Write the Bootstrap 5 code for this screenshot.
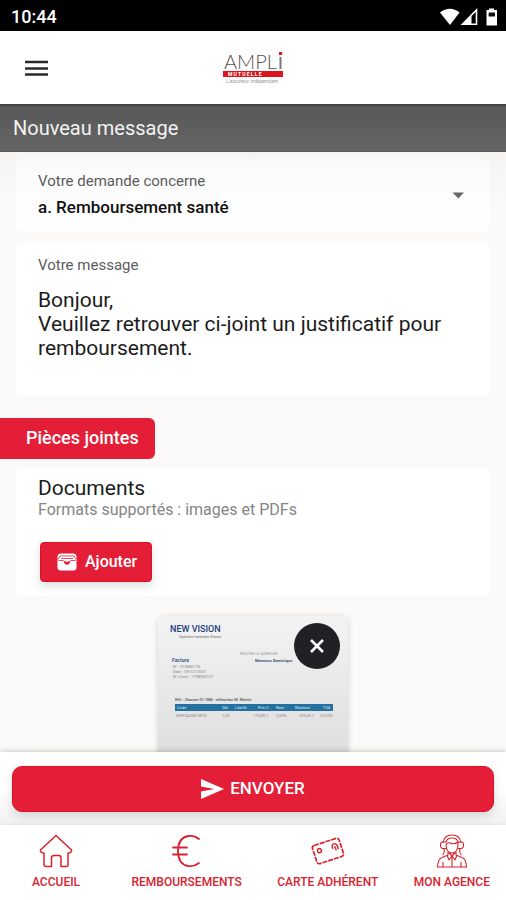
<!DOCTYPE html>
<html lang="fr">
<head>
<meta charset="utf-8">
<meta name="viewport" content="width=device-width, initial-scale=1">
<title>Nouveau message</title>
<link href="https://cdn.jsdelivr.net/npm/bootstrap@5.3.0/dist/css/bootstrap.min.css" rel="stylesheet">
<style>
  :root { --brand: #e51e38; --line: #d8232f; }
  body { font-family: Roboto, "Liberation Sans", sans-serif; background: #fbfaf8; color: #1c1c1c; }
  svg { display: block; flex: none; }
  .status-bar { background: #000; padding: 2px 7px 0 11px; height: 31px; font-size: 18px; font-weight: 500; }
  .app-header { background: #fff; height: 73px; padding: 0 24px; display: grid; grid-template-columns: 1fr auto 1fr; align-items: center; }
  .page-title { background: linear-gradient(#585858, #646464); height: 48px; padding: 0 13px 2px; font-size: 20px; color: #f2f2f2; border-top: 2px solid #444; border-bottom: 1px solid #555; }
  .scroll-area { background: linear-gradient(#f5f4f3, #fbfaf8 60px); min-height: 0; padding-top: 7px; }
  .panel { background: #fff; margin: 0 16px; border-radius: 6px; padding: 12px 22px; }
  .panel + .panel { margin-top: 12px; }
  .panel-soft { background: linear-gradient(#fafafa, #fff); }
  .field-label { display: block; font-size: 15px; line-height: 20px; color: #5c5c5c; }
  .plain-field { border: 0; background: transparent; padding: 0; width: 100%; display: block; outline: 0; color: #1c1c1c; appearance: none; resize: none; }
  .topic-select { font-size: 17px; line-height: 24px; font-weight: 500; color: #111; margin-top: 4px; }
  .message-text { font-size: 21px; line-height: 24px; overflow: hidden; margin-top: 13px; }
  .section-tag { background: var(--brand); color: #fff; font-size: 18px; line-height: 24px; font-weight: 500; padding: 8px 16px 9px 26px; margin: 22px 0 9px; border-radius: 0 6px 6px 0; }
  .doc-panel { padding-top: 8px; padding-bottom: 14px; }
  .doc-title { font-size: 21px; line-height: 24px; font-weight: 400; }
  .doc-hint { font-size: 16px; line-height: 20px; color: #858585; margin-bottom: 22px; }
  .btn-brand { --bs-btn-bg: var(--brand); --bs-btn-color: #fff; --bs-btn-border-color: #dc1029; --bs-btn-hover-bg: #cf1830; --bs-btn-hover-color: #fff; --bs-btn-font-weight: 500; box-shadow: 0 4px 10px rgba(0,0,0,.13); }
  .btn-add { font-size: 16px; height: 40px; padding: 0 14px 0 16px; border-radius: 4px; margin-left: 2px; }
  .btn-send { font-size: 17px; height: 46px; border-radius: 10px; gap: 6px; }
  .preview { width: 190px; margin-top: 20px; border-radius: 6px; box-shadow: 0 1px 6px rgba(0,0,0,.16); }
  .preview > svg { border-radius: 6px; }
  .btn-remove { width: 46px; height: 46px; top: 7px; right: 8px; background: #1f2125; border: 0; }
  .send-bar { background: linear-gradient(#fff 50%, #f0f0f1); height: 73px; padding: 14px 12px 0; box-shadow: 0 -1px 5px rgba(0,0,0,.2); z-index: 1; }
  .tab-bar { background: #fff; height: 75px; z-index: 2; padding-top: 8px; box-shadow: 0 -1px 3px rgba(0,0,0,.06); }
  .tab-bar a { color: var(--line); font-size: 12px; line-height: 16px; font-weight: 500; white-space: nowrap; gap: 5px; }
</style>
<script src="https://cdn.jsdelivr.net/npm/bootstrap@5.3.0/dist/js/bootstrap.bundle.min.js"></script>
</head>
<body class="vh-100 d-flex flex-column overflow-hidden">

<div class="status-bar flex-shrink-0 d-flex align-items-center justify-content-between text-white">
  <span>10:44</span>
  <svg width="60" height="20" viewBox="0 0 60 20" aria-hidden="true">
    <path d="M1 5.500Q11 -2 20.500 5.500L11 18Z" fill="#fff"/>
    <path d="M37.500 3V17.200H23.500Z" fill="none" stroke="#fff" stroke-width="1.600"/>
    <path d="M32.500 8V18H23Z" fill="#fff"/>
    <path d="M50 1.500h5v2h-5zM47.500 3h10.500V18.500H47.500Z" fill="#fff"/>
    <path d="M49.600 5.500h6.400V9.500h-6.400z" fill="#111"/>
  </svg>
</div>

<header class="app-header flex-shrink-0">
  <button class="btn p-0 border-0 text-start" type="button" aria-label="Menu">
    <svg width="25" height="18" viewBox="0 0 25 18"><path d="M1 3H24M1 9.500H24M1 15.500H24" stroke="#2b2b2b" stroke-width="2.400"/></svg>
  </button>
  <svg width="60" height="38" viewBox="0 0 60 38" role="img" aria-label="AMPLI Mutuelle">
    <text x="1" y="20" font-family="Lato" font-weight="300" font-size="20" fill="#5b524e">AMPL</text>
    <path d="M57.500 8V20" stroke="#777" stroke-width="2"/>
    <path d="M56 3h3.200v3H56zM0 22h60v6H0z" fill="#dd1420"/>
    <text x="5" y="27" font-family="Roboto" font-size="5" font-weight="700" fill="#fff">M  U  T  U  E  L  L  E</text>
    <text x="3" y="34" font-family="Roboto" font-size="5" fill="#999">L’assureur indépendant</text>
  </svg>
  <span></span>
</header>

<h1 class="page-title flex-shrink-0 m-0 fw-normal d-flex align-items-center">Nouveau message</h1>

<main class="scroll-area flex-fill overflow-hidden">
  <section class="panel panel-soft d-flex align-items-center">
    <div class="flex-fill">
      <label class="field-label" for="topic">Votre demande concerne</label>
      <select class="plain-field topic-select" id="topic"><option>a. Remboursement santé</option></select>
    </div>
    <svg width="20" height="10" viewBox="0 0 20 10" aria-hidden="true"><path d="M4.500 2.500H16L10.300 8.500Z" fill="#666"/></svg>
  </section>

  <section class="panel">
    <label class="field-label" for="message">Votre message</label>
    <textarea class="plain-field message-text" id="message" rows="4">Bonjour,
Veuillez retrouver ci-joint un justificatif pour remboursement.</textarea>
  </section>

  <h2 class="section-tag d-table">Pièces jointes</h2>

  <section class="panel doc-panel">
    <h3 class="doc-title m-0">Documents</h3>
    <p class="doc-hint">Formats supportés : images et PDFs</p>
    <button class="btn btn-brand btn-add d-flex align-items-center gap-2" type="button">
      <svg width="20" height="18" viewBox="0 0 20 18" aria-hidden="true">
        <path d="M4 .5H16Q19.500 .5 19.500 4V14.500Q19.500 17.500 16.500 17.500H3.500Q.5 17.500 .5 14.500V4Q.5 .5 4 .5Z" fill="#fff"/>
        <path d="M1 6.500L3 3H17L19 6.500M4 5.500H16M1.500 7.500H6.500M13.500 7.500H18.500" fill="none" stroke="#e51e38" stroke-width=".8"/>
        <path d="M6.500 7.500Q10 10 13.500 7.500Q13 11.500 10 11.800Q7 11.500 6.500 7.500Z" fill="#e51e38"/>
      </svg>
      Ajouter
    </button>
  </section>

  <div class="preview position-relative mx-auto">
    <svg width="190" height="240" viewBox="0 0 190 240" role="img" aria-label="Facture New Vision" font-family="Roboto">
      <defs><linearGradient id="paper" x2="0" y2="1"><stop stop-color="#f3f3f3"/><stop offset=".55" stop-color="#dfdfdf"/><stop offset="1" stop-color="#d0d0d0"/></linearGradient></defs>
      <rect width="190" height="240" fill="url(#paper)"/>
      <text x="12" y="16" font-size="9" font-weight="500" fill="#23407c">NEW VISION</text>
      <text x="21" y="22" font-size="4" fill="#666">Opticien lunettes Vision</text>
      <text x="82" y="39" font-size="4" fill="#999">NOUVELLE ADRESSE</text>
      <text x="97" y="46" font-size="4" font-weight="700" fill="#3c5578">Monsieur Dominique</text>
      <text x="14" y="46" font-size="5" font-weight="700" fill="#3c6288">Facture</text>
      <g font-size="4" fill="#888"><text x="15" y="52">N° : 010882176</text><text x="15" y="57">Date : 09/12/2020</text><text x="15" y="62">N° client : 1708000121</text></g>
      <text x="17" y="85" font-size="4" font-weight="500" fill="#555">Réf. : Dossier 01-088 - réfraction M. Martin</text>
      <rect x="17" y="88" width="158" height="7" fill="#24719f"/>
      <g font-size="4" fill="#dcecf5"><text x="19" y="93">Code</text><text x="64" y="93">Qté</text><text x="77" y="93">Libellé</text><text x="100" y="93">Prix U.</text><text x="118" y="93">Rem.</text><text x="137" y="93">Montant</text><text x="165" y="93">TVA</text></g>
      <g font-size="4" fill="#888"><text x="18" y="101">OPHTALMO MTG</text><text x="64" y="101">1,00</text><text x="95" y="101">170,83 €</text><text x="118" y="101">0,00%</text><text x="141" y="101">205,00 €</text><text x="162" y="101">20,00%</text></g>
    </svg>
    <button class="btn-remove position-absolute rounded-circle d-flex align-items-center justify-content-center p-0" type="button" aria-label="Supprimer">
      <svg width="16" height="16" viewBox="0 0 16 16"><path d="M2 2L14 14M14 2L2 14" stroke="#fff" stroke-width="2.600"/></svg>
    </button>
  </div>
</main>

<div class="send-bar flex-shrink-0 position-relative">
  <button class="btn btn-brand btn-send w-100 d-flex align-items-center justify-content-center" type="submit">
    <svg width="23" height="20" viewBox="0 0 23 20" aria-hidden="true"><path d="M0 0L23 10L0 20V12.500L13.500 10L0 7.500Z" fill="#fff"/></svg>
    ENVOYER
  </button>
</div>

<nav class="tab-bar flex-shrink-0 position-relative d-flex justify-content-between px-3" aria-label="Navigation principale">
  <a class="text-decoration-none d-flex flex-column align-items-center px-3" href="#accueil">
    <svg width="36" height="36" viewBox="0 0 36 36" fill="none" stroke="currentColor" stroke-width="1.500" stroke-linejoin="round"><path d="M18 2.500L33.500 17Q34 20 30 20V32Q30 33.500 28.500 33.500H23V25Q23 22.500 21 22.500H16Q13.500 22.500 13.500 25V33.500H8Q6 33.500 6 31.500V20Q2 20 2.500 17Z"/></svg>
    ACCUEIL
  </a>
  <a class="text-decoration-none d-flex flex-column align-items-center" href="#remboursements">
    <svg width="36" height="36" viewBox="0 0 36 36" fill="none" stroke="currentColor" stroke-width="1.800" stroke-linecap="round"><path d="M30 6Q25 2 19 3Q9 5 9 18Q9 31 19 33Q25 34 30 30M4 14.500H18M4 21.500H18"/></svg>
    REMBOURSEMENTS
  </a>
  <a class="text-decoration-none d-flex flex-column align-items-center" href="#carte">
    <svg width="36" height="36" viewBox="0 0 36 36" fill="none" stroke="currentColor" stroke-width="1.400"><g transform="rotate(-18 18 18)"><rect x="4" y="8.500" width="28" height="19" rx="2.500" stroke-width="1.700" stroke-dasharray="5 1"/><circle cx="10" cy="15" r="2"/><path d="M23.500 17.500Q22.500 14 25 13Q28 12.500 28.500 16V19.500M25.500 15.500Q26.500 17 26 20"/></g></svg>
    CARTE ADHÉRENT
  </a>
  <a class="text-decoration-none d-flex flex-column align-items-center" href="#agence">
    <svg width="36" height="36" viewBox="0 0 36 36" fill="none" stroke="currentColor" stroke-width="1.100" stroke-linejoin="round"><path d="M9 10Q10 2 18 2Q26 2 27 10M12 13Q12 9 16 10Q20 12 24 9V13Q23 20 18 20Q13 20 12 13ZM12 9Q13 5 18 5Q23 5 24 9M12 9H8.500Q6.500 9 6.500 12Q6.500 15.500 9 15.500H12M24 9H27.500Q29.500 9 29.500 12Q29.500 15.500 27 15.500H24M10 16Q11 20 8.500 22M26 16Q25 20 27.500 22M14 19V22L7 25Q4 26.500 3.500 34H32.500Q32 26.500 29 25L22 22V19M13 22L15 27L18 23L21 27L23 22M18 23V34M9 29V34M27 29V34M15 20L18 23L21 20"/></svg>
    MON AGENCE
  </a>
</nav>
</body>
</html>
